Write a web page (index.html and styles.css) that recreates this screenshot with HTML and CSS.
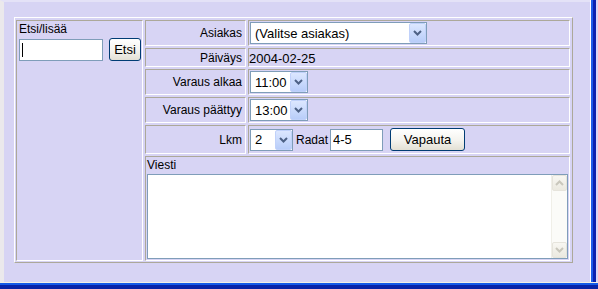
FILE: index.html
```html
<!DOCTYPE html>
<html lang="fi">
<head>
  <meta charset="UTF-8" />
  <title>Varaus</title>
  <link rel="stylesheet" href="styles.css">
</head>
<body>
  <div class="screen">
    <div class="main">
      <div class="page">
        <form class="booking">
          <div class="cell search">
            <div class="search-title">Etsi/lisää</div>
            <div class="search-row">
              <span class="field">
                <input type="text" class="text search-input" />
                <span class="caret"></span>
              </span>
              <button type="button" class="btn etsi">Etsi</button>
            </div>
          </div>

          <div class="cell label">Asiakas</div>
          <div class="cell value">
            <span class="dropdown customer">
              <select><option>(Valitse asiakas)</option></select>
              <span class="arrow"><svg width="9" height="6" viewBox="0 0 9 6"><path d="M1 1 L4.5 4.5 L8 1" fill="none" stroke="#4d6185" stroke-width="2"/></svg></span>
            </span>
          </div>

          <div class="cell label">Päiväys</div>
          <div class="cell value date">2004-02-25</div>

          <div class="cell label">Varaus alkaa</div>
          <div class="cell value">
            <span class="dropdown time">
              <select><option>11:00</option></select>
              <span class="arrow"><svg width="9" height="6" viewBox="0 0 9 6"><path d="M1 1 L4.5 4.5 L8 1" fill="none" stroke="#4d6185" stroke-width="2"/></svg></span>
            </span>
          </div>

          <div class="cell label">Varaus päättyy</div>
          <div class="cell value">
            <span class="dropdown time">
              <select><option>13:00</option></select>
              <span class="arrow"><svg width="9" height="6" viewBox="0 0 9 6"><path d="M1 1 L4.5 4.5 L8 1" fill="none" stroke="#4d6185" stroke-width="2"/></svg></span>
            </span>
          </div>

          <div class="cell label">Lkm</div>
          <div class="cell value">
            <span class="dropdown count">
              <select><option>2</option></select>
              <span class="arrow"><svg width="9" height="6" viewBox="0 0 9 6"><path d="M1 1 L4.5 4.5 L8 1" fill="none" stroke="#4d6185" stroke-width="2"/></svg></span>
            </span>
            <span class="inline-label">Radat</span>
            <input type="text" class="text lanes" value="4-5" />
            <button type="button" class="btn vapauta">Vapauta</button>
          </div>

          <div class="cell message">
            <div class="message-title">Viesti</div>
            <div class="memo">
              <textarea></textarea>
              <div class="scroll">
                <span class="scroll-btn"><svg width="9" height="6" viewBox="0 0 9 6"><path d="M1 5 L4.5 1.5 L8 5" fill="none" stroke="#c9c7bc" stroke-width="2"/></svg></span>
                <span class="scroll-btn"><svg width="9" height="6" viewBox="0 0 9 6"><path d="M1 1 L4.5 4.5 L8 1" fill="none" stroke="#c9c7bc" stroke-width="2"/></svg></span>
              </div>
            </div>
          </div>
        </form>
      </div>
      <div class="edge-right"></div>
    </div>
    <div class="edge-bottom"></div>
  </div>
</body>
</html>
```

FILE: styles.css
```css
* {
  box-sizing: border-box;
  margin: 0;
  padding: 0;
}

body {
  font-family: 'Liberation Sans', Arial, sans-serif;
  color: #000;
  background: #d7d4f4;
}

.screen {
  width: 598px;
  height: 289px;
  display: flex;
  flex-direction: column;
}

.main {
  flex: 1;
  display: flex;
}

.page {
  flex: 1;
  background: #d7d4f4;
  border-left: 4px solid #ebe9ec;
  border-top: 2px solid #e4e2f7;
  padding: 15px 0 0 10px;
}

.edge-right {
  width: 8px;
  background: linear-gradient(to right, #fff 0 1px, #1d5ce8 1px 3px, #0a22b0 3px 6px, #d7d4f4 6px);
}

.edge-bottom {
  height: 7px;
  background: linear-gradient(to bottom, #f2f0e6 0 1px, #155ae8 1px 3px, #0824a8 3px);
}

/* form frame */
.booking {
  width: 559px;
  display: grid;
  grid-template-columns: 127px 101px 322px;
  grid-template-rows: 26px 19px 26px 26px 29px 105px;
  gap: 2px;
  padding: 2px 2px 1px 1px;
  border: 1px solid;
  border-color: #fff #aca899 #aca899 #fff;
}

.cell {
  border: 1px solid;
  border-color: #aca899 #fff #fff #aca899;
  font-size: 12px;
}

.search {
  grid-row: 1 / 7;
  padding-left: 2px;
}

.search-title {
  line-height: 17px;
}

.search-row {
  display: flex;
  align-items: flex-end;
  height: 23px;
}

.field {
  position: relative;
  display: block;
  margin-right: 6px;
}

.search-input {
  display: block;
  width: 84px;
}

.caret {
  position: absolute;
  left: 3px;
  top: 4px;
  width: 1px;
  height: 14px;
  background: #000;
}

.label {
  display: flex;
  justify-content: flex-end;
  align-items: center;
  padding-right: 3px;
}

.value {
  display: flex;
  align-items: center;
}

.date {
  font-size: 13px;
  padding-top: 1px;
}

/* controls */
.dropdown {
  position: relative;
  display: inline-block;
  margin-left: 1px;
  height: 22px;
}

.dropdown select {
  appearance: none;
  -webkit-appearance: none;
  width: 100%;
  height: 22px;
  border: 1px solid #7f9db9;
  border-radius: 0;
  background: #fff;
  padding: 0 18px 0 4px;
  font-family: inherit;
  font-size: 13px;
  color: #000;
}

.customer {
  width: 177px;
}

.time {
  width: 58px;
}

.count {
  width: 43px;
}

.arrow {
  position: absolute;
  top: 1px;
  right: 1px;
  width: 17px;
  height: 20px;
  display: flex;
  align-items: center;
  justify-content: center;
  border: 1px solid #c0d1fa;
  border-radius: 2px;
  background: linear-gradient(#dce7ff, #b8cdf9);
  pointer-events: none;
}

.text {
  height: 22px;
  border: 1px solid #7f9db9;
  padding: 0 2px;
  font-family: inherit;
  font-size: 13px;
  outline: none;
}

.btn {
  height: 23px;
  border: 1px solid #003c74;
  border-radius: 3px;
  background: linear-gradient(#fff, #f4f3ee 55%, #e3e0d4);
  font-family: inherit;
  font-size: 13px;
  color: #000;
}

.etsi {
  width: 32px;
}

.inline-label {
  margin: 0 2px 0 3px;
}

.lanes {
  width: 53px;
}

.vapauta {
  width: 75px;
  margin-left: 7px;
}

/* message */
.message {
  grid-column: 2 / 4;
  padding-left: 1px;
}

.message-title {
  line-height: 17px;
}

.memo {
  position: relative;
  width: 421px;
  height: 85px;
}

.memo textarea {
  display: block;
  width: 100%;
  height: 100%;
  border: 1px solid #7f9db9;
  resize: none;
  overflow: hidden;
  outline: none;
}

.scroll {
  position: absolute;
  top: 1px;
  right: 1px;
  bottom: 1px;
  width: 16px;
  display: flex;
  flex-direction: column;
  justify-content: space-between;
  background: #fbfbf8;
  border-left: 1px solid #f0efe8;
}

.scroll-btn {
  height: 16px;
  display: flex;
  align-items: center;
  justify-content: center;
  border: 1px solid #e6e4dc;
  border-radius: 2px;
  background: linear-gradient(#f8f7f2, #ebe9e0);
}
```
